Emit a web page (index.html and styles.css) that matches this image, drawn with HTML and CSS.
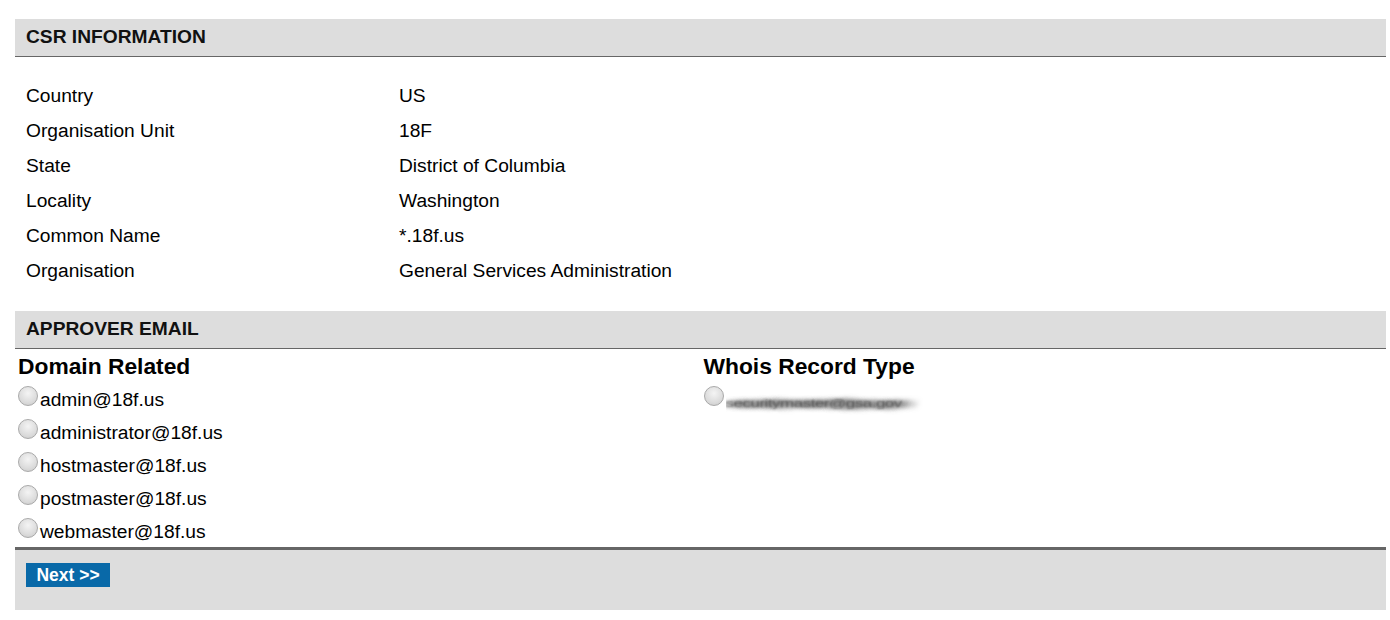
FILE: index.html
```html
<!DOCTYPE html>
<html>
<head>
<meta charset="utf-8">
<link rel="stylesheet" href="styles.css">
</head>
<body>
<div class="page">
  <div class="section-head">CSR INFORMATION</div>
  <table class="info">
    <tr><td class="lbl">Country</td><td>US</td></tr>
    <tr><td class="lbl">Organisation Unit</td><td>18F</td></tr>
    <tr><td class="lbl">State</td><td>District of Columbia</td></tr>
    <tr><td class="lbl">Locality</td><td>Washington</td></tr>
    <tr><td class="lbl">Common Name</td><td>*.18f.us</td></tr>
    <tr><td class="lbl">Organisation</td><td>General Services Administration</td></tr>
  </table>
  <div class="section-head">APPROVER EMAIL</div>
  <div class="cols">
    <div class="col">
      <h3>Domain Related</h3>
      <label class="opt"><span class="radio"></span>admin@18f.us</label>
      <label class="opt"><span class="radio"></span>administrator@18f.us</label>
      <label class="opt"><span class="radio"></span>hostmaster@18f.us</label>
      <label class="opt"><span class="radio"></span>postmaster@18f.us</label>
      <label class="opt"><span class="radio"></span>webmaster@18f.us</label>
    </div>
    <div class="col">
      <h3>Whois Record Type</h3>
      <label class="opt"><span class="radio"></span><span class="blurred">securitymaster@gsa.gov</span></label>
    </div>
  </div>
  <div class="footer">
    <button class="next">Next &gt;&gt;</button>
  </div>
</div>
</body>
</html>
```
FILE: styles.css
```css
html, body {
  margin: 0;
  padding: 0;
  background: #fff;
}
body {
  font-family: "Liberation Sans", Arial, sans-serif;
  color: #000;
  font-size: 19.2px;
}
.page {
  margin: 19px 4px 0 15px;
}
.section-head {
  background: #dddddd;
  border-bottom: 1px solid #666;
  height: 37px;
  line-height: 36px;
  padding-left: 11px;
  font-weight: bold;
  font-size: 19.2px;
  color: #111;
}
.info {
  border-collapse: collapse;
  margin: 21px 0 23px 0;
}
.info td {
  padding: 0;
  height: 35px;
  line-height: 35px;
  font-size: 19.2px;
}
.info td.lbl {
  padding-left: 11px;
  width: 373px;
}
.cols {
  display: flex;
}
.col {
  flex: 1;
  padding-left: 3px;
}
.col h3 {
  margin: 0;
  height: 33px;
  line-height: 34px;
  font-size: 22.8px;
  font-weight: bold;
}
.opt {
  display: flex;
  align-items: flex-start;
  height: 33px;
  line-height: 36px;
  font-size: 19.2px;
}
.radio {
  width: 20px;
  height: 20px;
  box-sizing: border-box;
  border-radius: 50%;
  border: 1px solid #a9a9a9;
  background: radial-gradient(circle at 50% 35%, #f4f4f4 0%, #dcdcdc 60%, #c8c8c8 100%);
  margin-top: 4px;
  margin-right: 2px;
  flex: none;
}
.blurred {
  display: inline-block;
  width: 200px;
  overflow: hidden;
  white-space: nowrap;
  color: transparent;
  font-size: 17px;
  letter-spacing: -0.5px;
  line-height: 40px;
  text-shadow: 0 0 3px rgba(70,70,70,0.9), 5px 0 5px rgba(90,90,90,0.9), 10px 0 6px rgba(110,110,110,0.8), -5px 0 5px rgba(110,110,110,0.7), 16px 0 7px rgba(130,130,130,0.7);
  transform: scaleY(0.65);
  transform-origin: 0 62%;
}
.footer {
  background: #dddddd;
  border-top: 3px solid #666;
  padding: 13px 0 0 11px;
  box-sizing: border-box;
  height: 63px;
}
.next {
  border: none;
  background: #0969a8;
  color: #fff;
  font-family: "Liberation Sans", Arial, sans-serif;
  font-weight: bold;
  font-size: 17.5px;
  width: 84px;
  height: 24px;
  padding: 0;
  line-height: 24px;
}
```
